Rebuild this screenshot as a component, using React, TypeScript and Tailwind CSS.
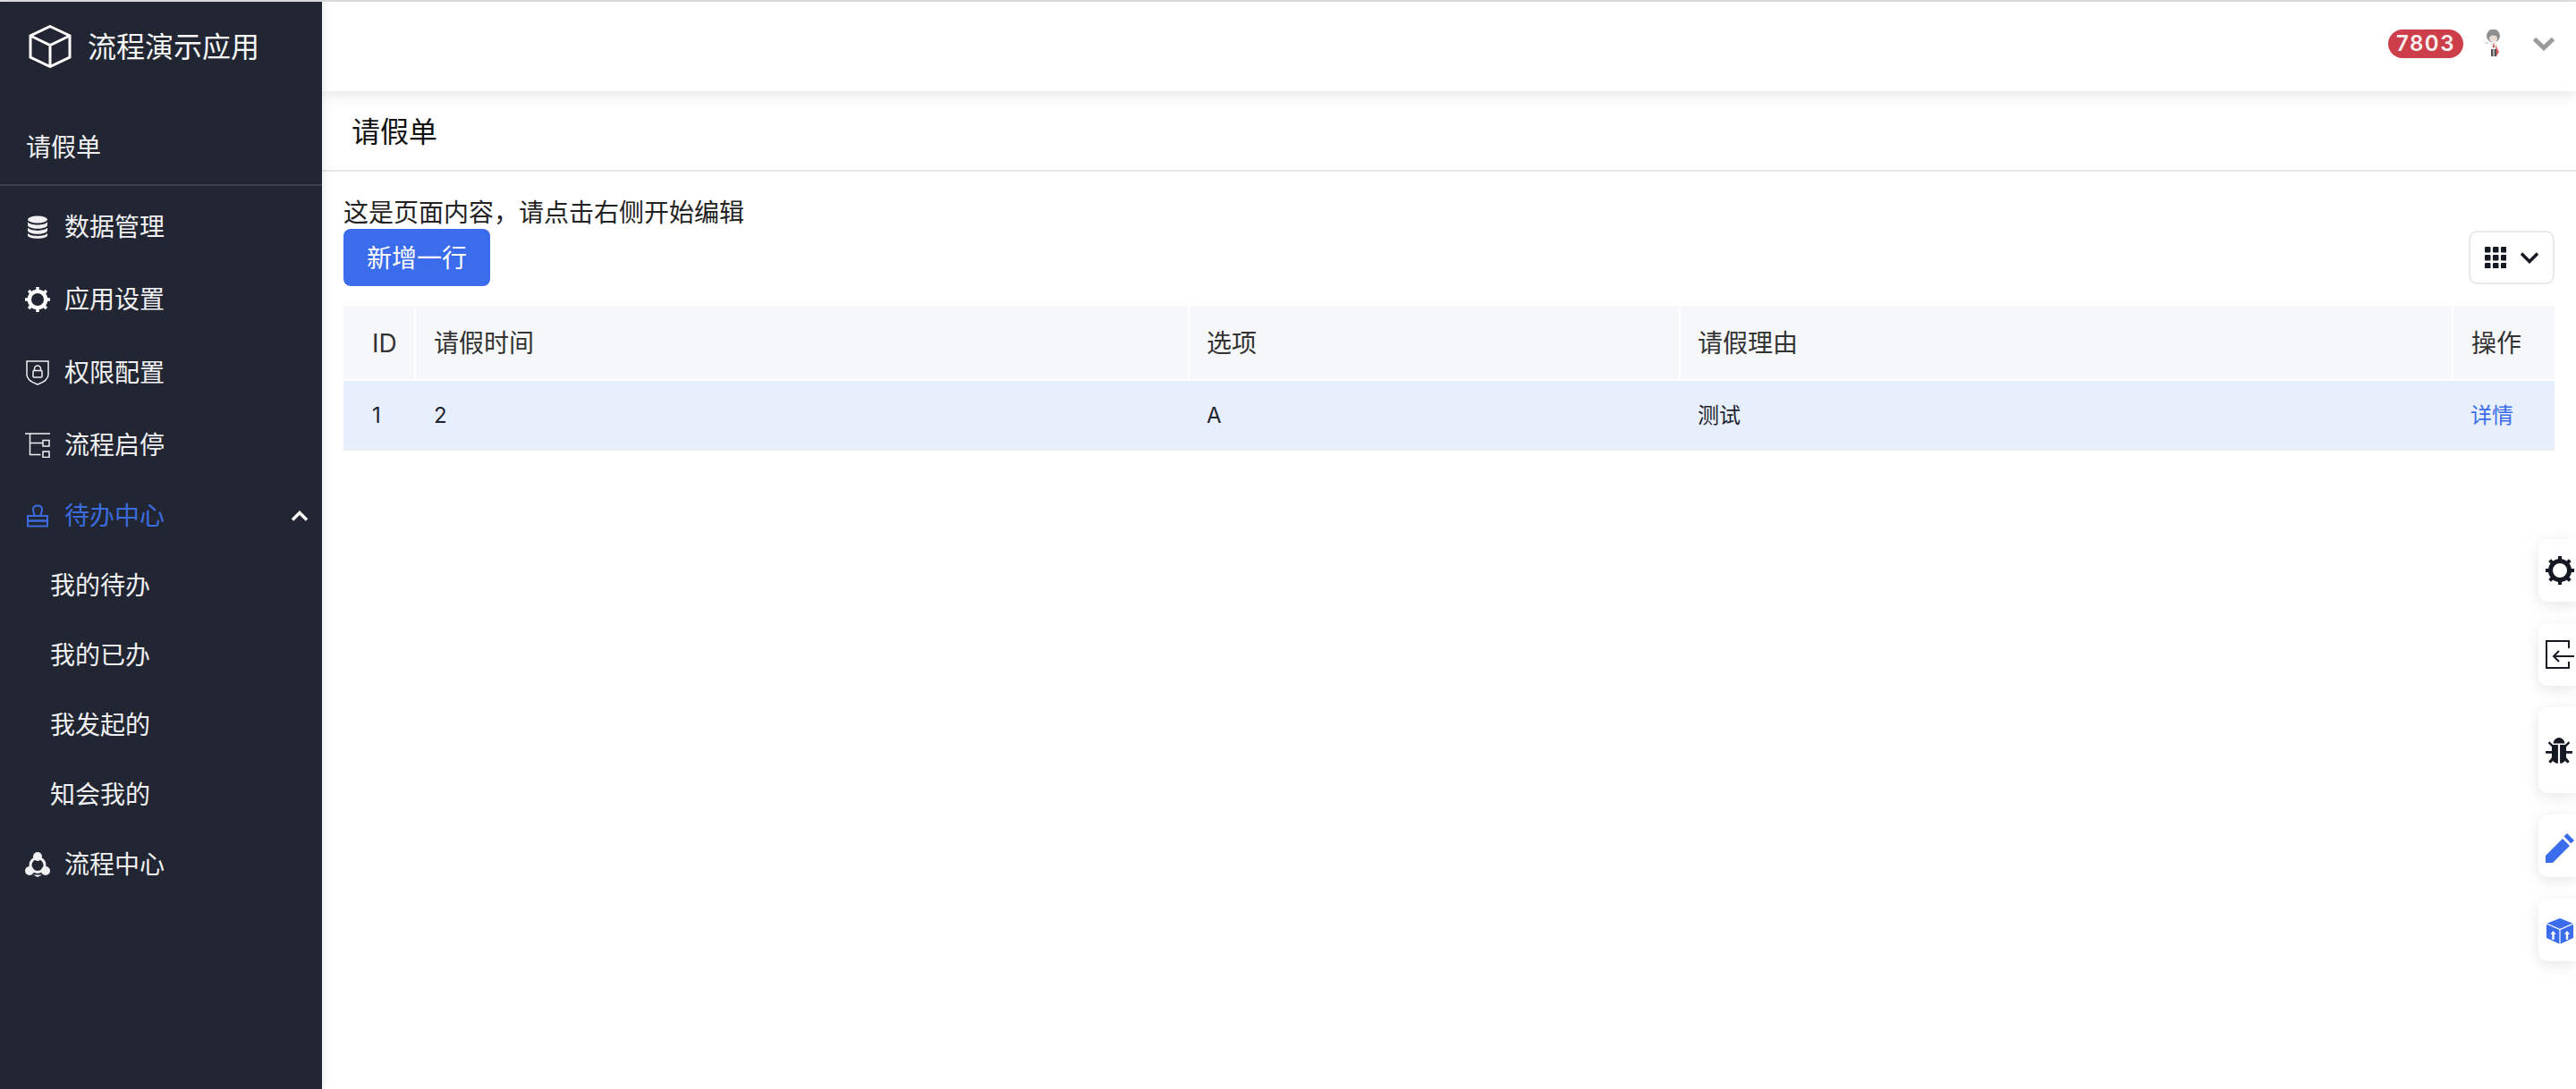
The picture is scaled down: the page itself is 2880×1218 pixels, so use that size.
import { ReactNode } from "react";

const font = "font-['Inter','Noto_Sans_CJK_SC',sans-serif]";

function Gear({ className }: { className?: string }) {
  return (
    <svg viewBox="0 0 32 32" className={className} fill="currentColor">
      {[0, 45, 90, 135, 180, 225, 270, 315].map((a) => (
        <rect key={a} x="14" y="0" width="4" height="6" transform={`rotate(${a} 16 16)`} />
      ))}
      <circle cx="16" cy="16" r="10.500" fill="none" stroke="currentColor" strokeWidth="5" />
    </svg>
  );
}

function DatabaseIcon() {
  return (
    <svg viewBox="0 0 28 28" className="w-7 h-7" fill="currentColor">
      <ellipse cx="14" cy="5.500" rx="11" ry="4" />
      <path d="M3 8.200c1.600 2.200 6 3.300 11 3.300s9.400-1.100 11-3.300v3.600c0 2.200-4.900 4-11 4s-11-1.800-11-4z" />
      <path d="M3 14.600c1.600 2.200 6 3.300 11 3.300s9.400-1.100 11-3.300v3.200c0 2.200-4.900 4-11 4s-11-1.800-11-4z" />
      <path d="M3 20.800c1.600 2.200 6 3.100 11 3.100s9.400-.9 11-3.100v2.400c0 2-4.900 3.500-11 3.500s-11-1.500-11-3.500z" />
    </svg>
  );
}

function ShieldIcon() {
  return (
    <svg viewBox="0 0 28 28" className="w-7 h-7" fill="none" stroke="currentColor" strokeWidth="1.500">
      <path d="M2 1h24v15c0 4.500-5 8.500-12 11C7 24.500 2 20.500 2 16z" />
      <rect x="9" y="11.500" width="10" height="7.500" rx="1" />
      <path d="M10.500 11.500V9.500a3.500 3.500 0 0 1 7 0v2" />
    </svg>
  );
}

function FlowIcon() {
  return (
    <svg viewBox="0 0 28 28" className="w-7 h-7" fill="none" stroke="currentColor" strokeWidth="1.500">
      <path d="M0 1h28M5.500 1v23.500h12M5.500 11.500h14" />
      <rect x="20" y="8.500" width="7" height="6.500" />
      <rect x="20" y="21" width="7" height="6.500" />
    </svg>
  );
}

function StampIcon() {
  return (
    <svg viewBox="0 0 28 28" className="w-7 h-7" fill="none" stroke="currentColor" strokeWidth="2">
      <path d="M10.500 13.500c.3-2-1.500-3-1.500-6.500 0-3 2-4.500 5-4.500s5 1.500 5 4.500c0 3.500-1.800 4.500-1.500 6.500" />
      <rect x="3" y="14" width="22" height="5.500" />
      <rect x="3" y="19.500" width="22" height="6" />
    </svg>
  );
}

function ClusterIcon() {
  return (
    <svg viewBox="0 0 28 28" className="w-7 h-7" fill="currentColor">
      <circle cx="14" cy="14.500" r="8" fill="none" stroke="currentColor" strokeWidth="3" />
      <circle cx="14" cy="5" r="5" />
      <circle cx="5" cy="21" r="5" />
      <circle cx="23" cy="21" r="5" />
      <path d="M9 25.500l5 2.500 5-2.500z" />
    </svg>
  );
}

function CubeLogo() {
  return (
    <svg viewBox="0 0 48 48" className="w-12 h-12 shrink-0" fill="none" stroke="currentColor" strokeWidth="3">
      <path d="M24 1.500l22 10.500v24l-22 10.500L2 36V12z" />
      <path d="M2 12l22 10.500L46 12M24 22.500v24" />
    </svg>
  );
}

function Avatar() {
  return (
    <svg viewBox="0 0 18 30" className="w-[18px] h-[30px]">
      <circle cx="9.500" cy="7" r="7.500" fill="#8f8f8f" />
      <ellipse cx="9.500" cy="10" rx="4.500" ry="3.500" fill="#e8dcd2" />
      <path d="M3 14h4l1-1h5l1 5v5H7v-5z" fill="#f2f2f2" />
      <rect x="0" y="14" width="4" height="2" fill="#e8dcd2" />
      <path d="M12 17l4 8-3 5z" fill="#d9605c" />
      <path d="M10 14l1 6H9z" fill="#b33" />
      <rect x="7" y="22" width="2.500" height="8" fill="#555" />
      <rect x="10.500" y="22" width="2.500" height="8" fill="#555" />
    </svg>
  );
}

function NavItem({ icon, label, h, active, right }: { icon?: ReactNode; label: string; h: string; active?: boolean; right?: ReactNode }) {
  return (
    <div className={`${h} flex items-center pl-[28px] pr-[16px] ${active ? "text-[#3b6cdf]" : "text-[#f1f1f3]"}`}>
      <span className="w-7 h-7 flex items-center justify-center shrink-0">{icon}</span>
      <span className="ml-[16px] flex-1">{label}</span>
      {right}
    </div>
  );
}

function Sidebar() {
  return (
    <aside className="w-[360px] shrink-0 bg-[#222633] text-white text-[28px] leading-[40px] z-20 shadow-[2px_0_10px_rgba(0,0,0,0.08)]">
      <div className="h-[100px] flex items-center pl-[32px]">
        <CubeLogo />
        <span className="ml-[18px] mt-[2px] text-[32px] text-[#f7f7f8]">流程演示应用</span>
      </div>
      <div className="h-[106px] pl-[29px] pt-[43px] border-b-2 border-[#3b3e4b] text-[#f1f1f3]">请假单</div>
      <div className="pt-[5px]">
        <NavItem h="h-[81.5px]" icon={<DatabaseIcon />} label="数据管理" />
        <NavItem h="h-[81.5px]" icon={<Gear className="w-7 h-7 text-white" />} label="应用设置" />
        <NavItem h="h-[81.5px]" icon={<ShieldIcon />} label="权限配置" />
        <NavItem h="h-[80px]" icon={<FlowIcon />} label="流程启停" />
        <NavItem
          h="h-[78px]"
          active
          icon={<StampIcon />}
          label="待办中心"
          right={
            <svg viewBox="0 0 18 12" className="w-[18px] h-[12px] text-white" fill="none" stroke="currentColor" strokeWidth="3.500">
              <path d="M1 10.500l8-8 8 8" />
            </svg>
          }
        />
        {["我的待办", "我的已办", "我发起的", "知会我的"].map((t) => (
          <div key={t} className="h-[78.2px] flex items-center pl-[56px] text-[#f1f1f3]">
            {t}
          </div>
        ))}
        <NavItem h="h-[78px]" icon={<ClusterIcon />} label="流程中心" />
      </div>
    </aside>
  );
}

function Header() {
  return (
    <header className="h-[100px] shrink-0 bg-white flex items-center justify-end pr-[24px] shadow-[0_4px_14px_rgba(0,0,0,0.1)] z-10 relative">
      <span className="h-[32px] w-[84px] rounded-full bg-[#cc3f4a] text-[#f8eeee] font-['Inter',sans-serif] font-semibold text-[24px] tracking-[1.500px] flex items-center justify-center -mt-[7px]">
        7803
      </span>
      <span className="ml-[24px] w-[18px] -mt-[9px]">
        <Avatar />
      </span>
      <svg viewBox="0 0 24 16" className="ml-[36px] w-[24px] h-[16px] text-[#9b9b9b] -mt-[7px]" fill="none" stroke="currentColor" strokeWidth="5">
        <path d="M1.500 2.500L12 12.500 22.500 2.500" />
      </svg>
    </header>
  );
}

function Table() {
  const cols = "grid grid-cols-[79px_2px_863px_2px_547px_2px_862px_2px_113px]";
  return (
    <div className="mt-[22px] text-[#333333]">
      <div className={`${cols} h-[82px] text-[28px] items-center bg-white`}>
        <div className="bg-[#f6f7f9] h-full flex items-center pl-[32px] pt-[1px]">ID</div>
        <div />
        <div className="bg-[#f6f7f9] h-full flex items-center pl-[20px] pt-[1px]">请假时间</div>
        <div />
        <div className="bg-[#f6f7f9] h-full flex items-center pl-[19px] pt-[1px]">选项</div>
        <div />
        <div className="bg-[#f6f7f9] h-full flex items-center pl-[19px] pt-[1px]">请假理由</div>
        <div />
        <div className="bg-[#f6f7f9] h-full flex items-center pl-[20px] pt-[1px]">操作</div>
      </div>
      <div className={`${cols} mt-[2px] h-[78px] bg-[#e7effc] border-b-2 border-[#e9ebee] text-[24px] text-[#1f2430] items-center`}>
        <div className="pl-[32px] pt-[2px]">1</div>
        <div />
        <div className="pl-[20px] pt-[2px]">2</div>
        <div />
        <div className="pl-[19px] pt-[2px]">A</div>
        <div />
        <div className="pl-[19px] pt-[2px]">测试</div>
        <div />
        <div className="pl-[19px] pt-[2px] text-[#3b6cec]">详情</div>
      </div>
    </div>
  );
}

function FloatTab({ h, children }: { h: string; children: ReactNode }) {
  return (
    <div className={`${h} w-[42px] bg-white rounded-l-[10px] shadow-[0_4px_16px_rgba(0,0,0,0.1)] pl-[8px] flex items-center`}>
      {children}
    </div>
  );
}

function FloatTabs() {
  return (
    <div className="absolute right-0 top-[603px] flex flex-col gap-[24px] z-30">
      <FloatTab h="h-[70px]">
        <Gear className="w-8 h-8 text-[#141924]" />
      </FloatTab>
      <FloatTab h="h-[70px]">
        <svg viewBox="0 0 32 32" className="w-8 h-8 text-[#141924]" fill="none" stroke="currentColor" strokeWidth="2">
          <path d="M26 9V1H1v30h25v-7" />
          <path d="M32 18H9M15 12l-6 6 6 6" />
        </svg>
      </FloatTab>
      <FloatTab h="h-[96px]">
        <svg viewBox="0 0 28 30" className="w-[30px] h-[32px] text-[#141924] mt-[2px]" fill="currentColor">
          <path d="M8 7a6 6 0 0 1 12 0z" />
          <path d="M6.500 8.500h6.500V28c-4-.3-6.500-3-6.500-7zM15 8.500h6.500V21c0 4-2.500 6.700-6.500 7z" />
          <path d="M4 5l4 4-1.500 1.500-4-4zM24 5l-4 4 1.500 1.500 4-4zM0 15h7v2.500H0zM21 15h7v2.500h-7zM7 21l-4 5 2 2 5-5zM21 21l4 5-2 2-5-5z" />
        </svg>
      </FloatTab>
      <FloatTab h="h-[70px]">
        <svg viewBox="0 0 32 33" className="w-8 h-[33px] text-[#3b6cec] mt-[4px]" fill="currentColor">
          <path d="M0 25L19 6l8 8L8 33H0z" />
          <path d="M24 0l8 8-3.500 3.500-8-8z" />
        </svg>
      </FloatTab>
      <FloatTab h="h-[70px]">
        <svg viewBox="0 0 30 29" className="w-[30px] h-[29px] text-[#3b6cec] ml-[1px] mt-[3px]">
          <path d="M15 0l15 6v16l-15 7-15-7V6z" fill="currentColor" />
          <path d="M0 6l15 6.500L30 6M15 12.500V29" stroke="#fff" strokeWidth="1.200" fill="none" />
          <path d="M7.500 14l3 4H8.700v6H6.300v-6H4.500zM23 14l3 4h-1.800v6h-2.400v-6H20z" fill="#fff" />
        </svg>
      </FloatTab>
    </div>
  );
}

export default function App() {
  return (
    <div className={`h-screen overflow-hidden flex flex-col bg-white relative ${font}`}>
      <div className="h-[2px] bg-[#e0e0e0] shrink-0" />
      <div className="flex flex-1 min-h-0">
        <Sidebar />
        <main className="flex-1 min-w-0 flex flex-col">
          <Header />
          <div className="h-[90px] shrink-0 border-b-2 border-[#e8e8e8] pl-[33px] pt-[23px] text-[32px] leading-[46px] text-[#111111]">请假单</div>
          <div className="px-[24px] pt-[24px] text-[28px] leading-[40px] text-[#222222]">
            <div className="pt-[2px] h-[40px]">{"这是页面内容\uFF0C请点击右侧开始编辑"}</div>
            <div className="flex items-center justify-between h-[64px]">
              <button className="h-[64px] w-[164px] pt-[2px] rounded-[8px] bg-[#3b6cec] text-white text-[28px]">新增一行</button>
              <button className="w-[96px] h-[60px] border-2 border-[#e9e9e9] rounded-[10px] flex items-center pl-[16px] text-[#141924]">
                <svg viewBox="0 0 24 24" className="w-6 h-6" fill="currentColor">
                  {[0, 9, 18].flatMap((y) =>
                    [0, 9, 18].map((x) => <rect key={`${x}-${y}`} x={x} y={y} width="6.500" height="6.500" rx="1" />),
                  )}
                </svg>
                <svg viewBox="0 0 20 14" className="ml-[16px] w-5 h-[14px]" fill="none" stroke="currentColor" strokeWidth="3.500">
                  <path d="M1 2.500l9 9 9-9" />
                </svg>
              </button>
            </div>
            <Table />
          </div>
        </main>
      </div>
      <FloatTabs />
    </div>
  );
}
